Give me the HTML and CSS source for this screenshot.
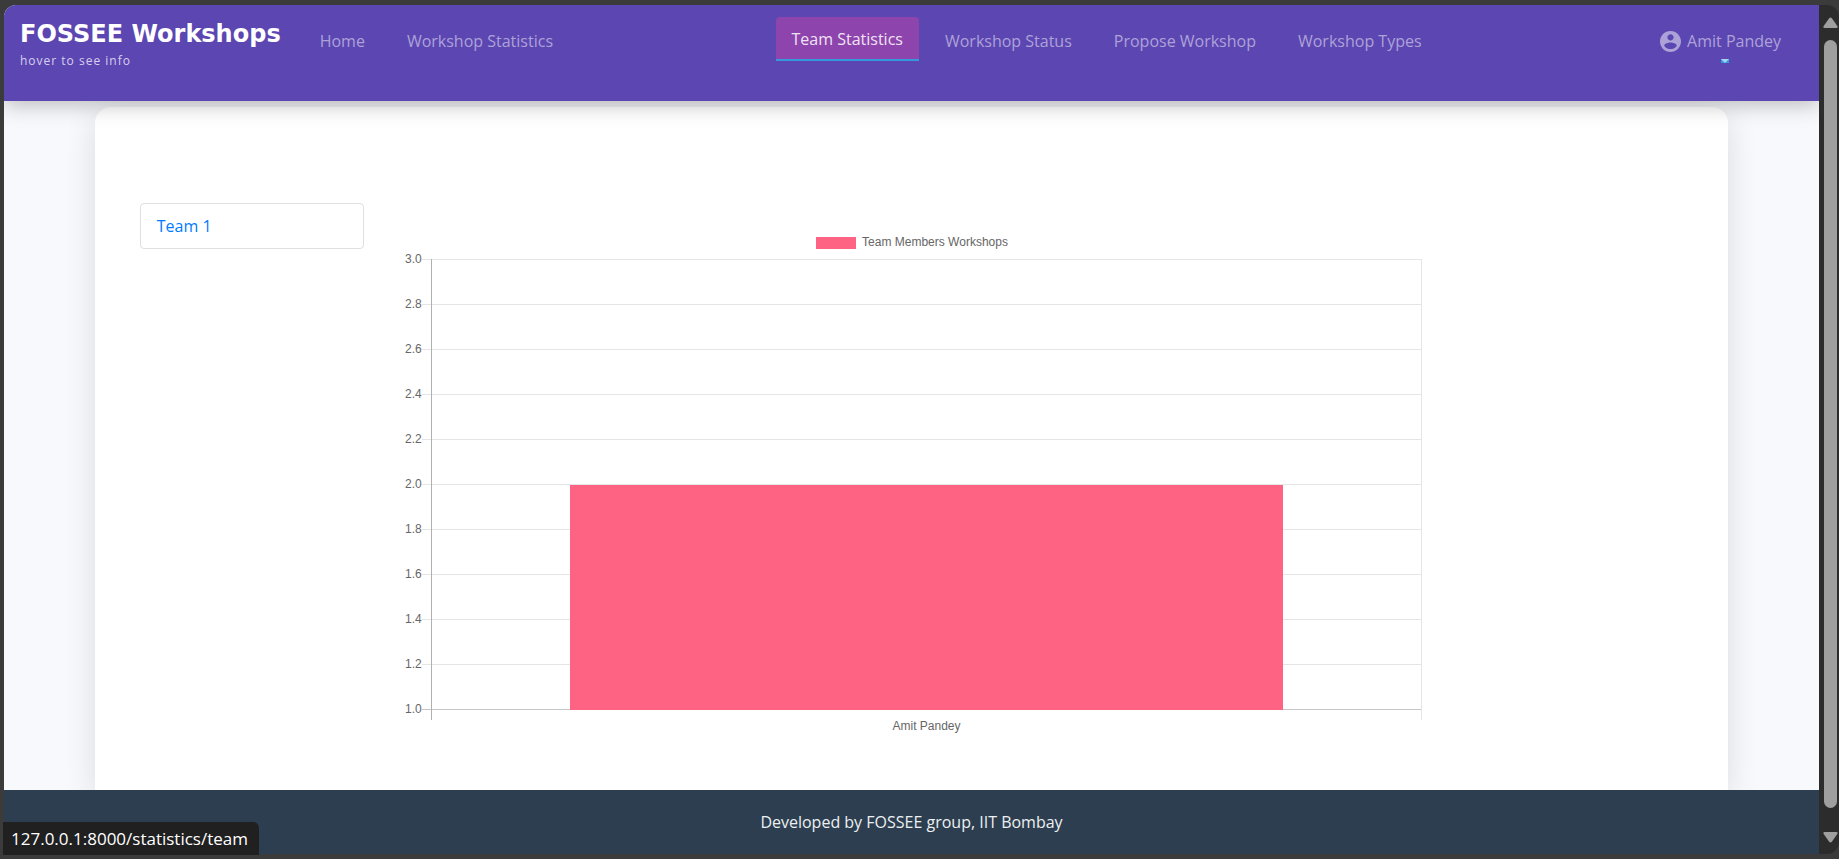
FILE: index.html
```
<!DOCTYPE html>
<html lang="en">
<head>
<meta charset="utf-8">
<title>Team Statistics</title>
<link rel="stylesheet" href="styles.css">
</head>
<body>
<div class="window">
  <div class="page">
    <header class="navbar">
      <a class="brand" href="#">
        <span class="brand-name">FOSSEE Workshops</span>
        <span class="brand-note">hover to see info</span>
      </a>
      <nav class="nav">
        <div class="nav-group">
          <a class="nav-link" href="#">Home</a>
          <a class="nav-link" href="#">Workshop Statistics</a>
        </div>
        <div class="nav-group">
          <a class="nav-link active" href="#">Team Statistics</a>
          <a class="nav-link" href="#">Workshop Status</a>
          <a class="nav-link" href="#">Propose Workshop</a>
          <a class="nav-link" href="#">Workshop Types</a>
        </div>
        <button class="user" type="button">
          <svg class="user-icon" viewBox="2 2 20 20" aria-hidden="true"><path d="M12 2C6.480 2 2 6.480 2 12s4.480 10 10 10 10-4.480 10-10S17.520 2 12 2zm0 3c1.660 0 3 1.340 3 3s-1.340 3-3 3-3-1.340-3-3 1.340-3 3-3zm0 14.200c-2.500 0-4.710-1.280-6-3.220.03-1.990 4-3.080 6-3.080 1.990 0 5.970 1.090 6 3.080-1.290 1.940-3.500 3.220-6 3.220z"/></svg>
          <span>Amit Pandey</span>
          <svg class="user-caret" viewBox="0 0 8 4" aria-hidden="true"><path class="caret-bg" d="M0 0h8v4H0z"/><path class="caret-tip" d="M0 0h8L4 4z"/></svg>
        </button>
      </nav>
    </header>
    <main class="main">
      <section class="card">
        <ul class="teams">
          <li><a class="team" href="#">Team 1</a></li>
        </ul>
        <figure class="chart">
          <figcaption class="legend"><span class="swatch"></span><span class="legend-label">Team Members Workshops</span></figcaption>
          <div class="graph">
            <div class="scale">
              <div class="tick"><span>3.0</span></div>
              <div class="tick"><span>2.8</span></div>
              <div class="tick"><span>2.6</span></div>
              <div class="tick"><span>2.4</span></div>
              <div class="tick"><span>2.2</span></div>
              <div class="tick"><span>2.0</span></div>
              <div class="tick"><span>1.8</span></div>
              <div class="tick"><span>1.6</span></div>
              <div class="tick"><span>1.4</span></div>
              <div class="tick"><span>1.2</span></div>
              <div class="tick base"><span>1.0</span></div>
            </div>
            <div class="plot"><div class="bar" style="height:50%"></div></div>
            <div class="category">Amit Pandey</div>
          </div>
        </figure>
      </section>
    </main>
    <footer class="footer">Developed by FOSSEE group, IIT Bombay</footer>
  </div>
  <div class="scrollbar" aria-hidden="true">
    <svg class="arrow" viewBox="0 0 15 12"><path d="M6 1.500q1.500-2 3 0l5.300 7.500q1 2-1 2H1.700q-2 0-1-2z"/></svg>
    <div class="thumb"></div>
    <svg class="arrow" viewBox="0 0 15 12"><path d="M6 10.500q1.500 2 3 0l5.300-7.500q1-2-1-2H1.700q-2 0-1 2z"/></svg>
  </div>
  <div class="status">127.0.0.1:8000/statistics/team</div>
</div>
</body>
</html>
```

FILE: styles.css
```
* { box-sizing: border-box; }
body {
  margin: 0;
  background: #3b3b3b;
  font-family: "Open Sans", "Noto Sans", sans-serif;
  font-size: 16px;
  line-height: 24px;
}
a { text-decoration: none; }
.window {
  position: relative;
  display: flex;
  min-height: 100vh;
  padding: 5px 0 5px 4px;
}
.page {
  flex: 1;
  display: flex;
  flex-direction: column;
  overflow: hidden;
  background: #f8f9fd;
  border-radius: 12px 0 0 0;
}
.navbar {
  position: relative;
  z-index: 1;
  display: flex;
  align-items: flex-start;
  gap: 23px;
  padding: 12px 22px 30px 16px;
  background: #5c46b2;
  box-shadow: 0 4px 20px rgba(0, 0, 0, .25);
}
.brand {
  display: flex;
  flex-direction: column;
  color: #fff;
}
.brand-name {
  font: 700 24px/34px "DejaVu Sans", sans-serif;
  white-space: nowrap;
}
.brand-note {
  font-size: 12px;
  line-height: 20px;
  letter-spacing: 1px;
  color: #d6d0ec;
}
.nav {
  flex: 1;
  display: flex;
  justify-content: space-between;
  align-items: flex-start;
}
.nav-group { display: flex; align-items: flex-start; gap: 10px; }
.nav-link {
  margin-top: 2px;
  padding: 10px 16px;
  color: #ada2d8;
  border-radius: 4px;
  white-space: nowrap;
}
.nav-link.active {
  margin-top: 0;
  padding-bottom: 8px;
  color: #eee3f3;
  background: #8e44ad;
  border-bottom: 2px solid #3498db;
  border-radius: 4px 4px 0 0;
}
.user {
  position: relative;
  display: flex;
  align-items: center;
  gap: 6px;
  margin: 2px 0 0;
  padding: 10px 16px;
  border: 0;
  background: none;
  color: #ada2d8;
  font: inherit;
}
.user-icon { width: 21px; height: 21px; fill: #ada2d8; }
.user-caret {
  position: absolute;
  left: 50%;
  bottom: 0;
  width: 8px;
  height: 4px;
}
.caret-bg { fill: #3498db; }
.caret-tip { fill: #a3d4f0; }
.main { flex: 1; padding: 6px 5% 0; display: flex; }
.card {
  flex: 1;
  display: grid;
  grid-template-columns: 224px 1fr 223px;
  gap: 38px;
  padding: 96px 45px 48px;
  background: #fff;
  border-radius: 16px 16px 0 0;
  box-shadow: 0 8px 32px rgba(0, 0, 0, .12);
}
.teams { margin: 0; padding: 0; list-style: none; }
.team {
  display: block;
  padding: 10px 16px;
  border: 1px solid #dfdfdf;
  border-radius: 4px;
  color: #007bff;
}
.chart {
  margin: 0;
  padding-top: 28px;
  color: #666;
  font: 12px/24px "Liberation Sans", Arial, sans-serif;
}
.legend {
  display: flex;
  justify-content: center;
  align-items: center;
  gap: 6px;
  margin-bottom: 4px;
}
.legend-label { padding-bottom: 2px; line-height: 22px; }
.swatch { width: 40px; height: 12px; background: #ff6384; }
.graph { display: grid; grid-template: 451px auto / 29px 1fr; }
.scale {
  grid-area: 1 / 1 / 2 / 3;
  display: flex;
  flex-direction: column;
  justify-content: space-between;
}
.tick { display: flex; align-items: center; height: 1px; }
.tick span { width: 20px; padding-bottom: 2px; text-align: right; }
.tick::after { content: ""; flex: 1; height: 1px; background: #e5e5e5; }
.tick.base::after { background: #c6c6c6; }
.plot {
  grid-area: 1 / 2 / 2 / 3;
  display: flex;
  justify-content: center;
  align-items: flex-end;
  margin-bottom: -10px;
  padding-bottom: 10px;
  border-left: 1px solid #b0b0b0;
  border-right: 1px solid #e5e5e5;
}
.bar { width: 72%; background: #ff6384; }
.category { grid-area: 2 / 2 / 3 / 3; padding-top: 4px; text-align: center; }
.footer {
  position: relative;
  padding: 20px;
  background: #2c3e50;
  color: #ecf0f1;
  text-align: center;
}
.scrollbar {
  display: flex;
  flex-direction: column;
  align-items: center;
  gap: 11px;
  width: 20px;
  padding: 12px 0 11px 3px;
  background: #2c2c2c;
  border-radius: 0 12px 12px 0;
}
.arrow { width: 15px; height: 12px; fill: #9f9f9f; }
.thumb { flex: 1; width: 13px; margin-bottom: 12px; background: #9f9f9f; border-radius: 7px; }
.status {
  position: absolute;
  left: 3px;
  bottom: 4px;
  padding: 5px 11px 4px 8px;
  background: #202020;
  color: #fff;
  font-size: 17px;
  border-radius: 0 6px 0 0;
}
```
